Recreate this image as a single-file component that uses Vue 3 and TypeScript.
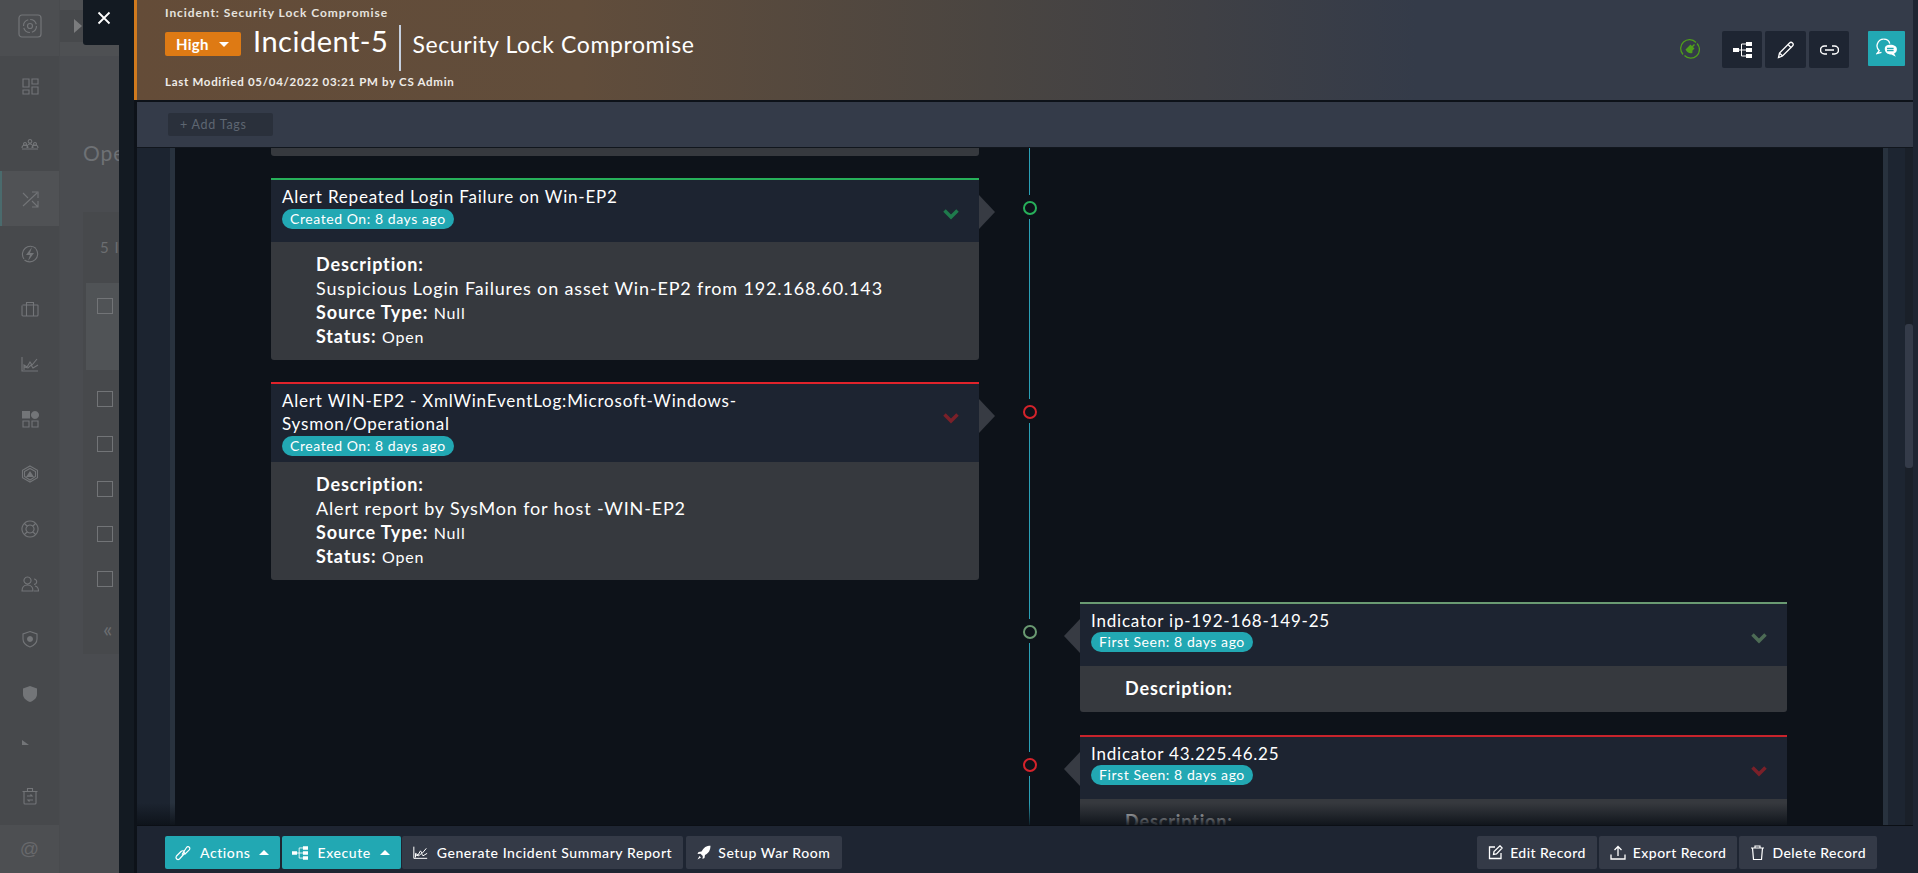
<script setup lang="ts">
interface NavIcon { d: string; fill?: string; active?: boolean; short?: boolean }
const navIcons: NavIcon[] = [
  { d: 'M2 2h6v8H2zM11 2h6v5h-6zM2 13h6v4H2zM11 10h6v7h-6z' },
  { d: 'M1 13c0-2 1-3 3-3s3 1 3 3M6 13c0-3 1-4 3-4s3 1 3 4M11 13c0-2 1-3 3-3s3 1 3 3M1 14h16M4 7.500a1.500 1.500 0 1 0 .01 0M9 4.500a1.800 1.800 0 1 0 .01 0M14 7.500a1.500 1.500 0 1 0 .01 0' },
  { d: 'M2 16 16 3M11 2h6v6M2 3l5 5M11 11l6 6M17 11v6h-6', active: true },
  { d: 'M15 3.500A8 8 0 0 0 3 14M3.500 15A8 8 0 0 0 15 4', fill: 'M11 2 5 10h4l-2 6 6-8H9z' },
  { d: 'M1.500 5h15a.5.5 0 0 1 .5.5V15a1 1 0 0 1-1 1H2a1 1 0 0 1-1-1V5.500M5.500 5V2.500h7V5M5.500 5v11M12.500 5v11' },
  { d: 'M1 2v14h16M3 15v-5l3 2 3-5 2 3 5-6M3 12l4 1 3-3 2 3 5-3' },
  { d: 'M2 11h6v6H2zM11 11h6v6h-6z', fill: 'M1 1h8v7.500H1zM14 1a4 4 0 1 1-.01 0' },
  { d: 'M9 1l7.500 4.200v7.600L9 17l-7.500-4.200V5.200zM3.500 6.500 9 3.500l5.500 3v5L9 15l-5.500-3.500z', fill: 'M9 6l4 6H5z' },
  { d: 'M9 1a8 8 0 1 0 .01 0M9 5a4 4 0 1 0 .01 0M3.500 3.500l3 3M14.500 3.500l-3 3M3.500 14.500l3-3M14.500 14.500l-3-3' },
  { d: 'M6.500 2a3.500 3.500 0 1 0 .01 0M1 16c0-4 2-6 5.500-6s5.500 2 5.500 6zM13 4a2.700 2.700 0 1 1 0 5.400M14 11c2 .5 3.500 2 3.500 5H13' },
  { d: 'M9 1.500l7 2.500v5c0 4-3 6.500-7 8-4-1.500-7-4-7-8V4z', fill: 'M9 6a3 3 0 1 0 .01 0' },
  { d: '', fill: 'M9 1l7 2.500V9c0 4-3 6.500-7 8-4-1.500-7-4-7-8V3.500z' },
  { d: '', fill: 'M1 8V3l7 5z', short: true },
  { d: 'M3 4.500h12V16a1 1 0 0 1-1 1H4a1 1 0 0 1-1-1zM1.500 4.500h15M6.500 4V1.500h5V4M6 9h5l-1.500-1.500M12 13H7l1.500 1.500', short: true }
]
</script>

<template>
  <div class="screen">
    <nav class="nav">
      <div class="nav-logo">
        <svg width="24" height="24" viewBox="0 0 24 24" fill="none" stroke="#737578" stroke-width="1.200">
          <rect x="1" y="1" width="22" height="22" rx="3" />
          <circle cx="12" cy="12" r="6.500" stroke-dasharray="8 2" />
          <circle cx="12" cy="12" r="2.500" />
        </svg>
      </div>
      <div
        v-for="(icon, i) in navIcons"
        :key="i"
        class="nav-row"
        :class="{ active: icon.active, short: icon.short, first: i === 0 }"
      >
        <svg width="18" height="18" viewBox="0 0 18 18" fill="none" stroke="#737578" stroke-width="1.100">
          <path v-if="icon.d" :d="icon.d" />
          <path v-if="icon.fill" :d="icon.fill" fill="#737578" stroke="none" />
        </svg>
      </div>
      <div class="nav-at">@</div>
    </nav>

    <section class="page">
      <div class="page-crumb"><span class="crumb-arrow"></span></div>
      <h1 class="page-title">Open Incidents</h1>
      <div class="list">
        <div class="list-head">5 Incidents</div>
        <div class="list-selected"><span class="check"></span></div>
        <div class="list-row"><span class="check"></span></div>
        <div class="list-row"><span class="check"></span></div>
        <div class="list-row"><span class="check"></span></div>
        <div class="list-row"><span class="check"></span></div>
        <div class="list-row"><span class="check"></span></div>
        <div class="pager">«</div>
      </div>
    </section>

    <div class="drawer">
      <button class="close" type="button" aria-label="Close">
        <svg width="14" height="14" viewBox="0 0 14 14" stroke="#fff" stroke-width="1.800"><path d="M1.500 1.500l11 11M12.500 1.500l-11 11" /></svg>
      </button>
      <div class="panel">
        <header class="head">
          <div class="head-main">
            <div class="crumb">Incident: Security Lock Compromise</div>
            <div class="title-row">
              <span class="sev">High<i class="caret-down"></i></span>
              <span class="inc">Incident-5</span>
              <span class="inc-name">Security Lock Compromise</span>
            </div>
            <div class="modified">Last Modified 05/04/2022 03:21 PM by CS Admin</div>
          </div>
          <div class="head-tools">
            <svg class="status" width="20" height="20" viewBox="0 0 20 20" fill="none">
              <path d="M3 15.500A8.500 8.500 0 0 1 16 3.500M17 4.500A8.500 8.500 0 0 1 4.500 16.500" stroke="#4f9e1b" stroke-width="1.300" />
              <path d="M5.500 10.500l5-5 1.500 1.500 2-2 1 1-2 2 1.500 1.500-2 2-.2 2.500c-2.800 1-5.500-.8-6.800-3.500z" fill="#4f9e1b" />
            </svg>
            <div class="tool-group">
              <button class="tool" type="button" aria-label="Playbooks">
                <svg width="19" height="16" viewBox="0 0 19 16" fill="#fff"><path d="M0 6h6v4H0zM13 0h6v4h-6zM13 6h6v4h-6zM13 12h6v4h-6z" /><path d="M6 8h7M8.500 2H13M8.500 14H13M8.500 2v12" stroke="#fff" fill="none" /></svg>
              </button>
              <button class="tool tool-mid" type="button" aria-label="Edit">
                <svg width="18" height="18" viewBox="0 0 18 18" fill="none" stroke="#fff" stroke-width="1.300"><path d="M1.500 16.500l1-4.500L12.500 2c1-1 2-1 3 0s1 2 0 3L5.500 15zM2.500 12l3 3M11 3.500l3.500 3.500" /></svg>
              </button>
              <button class="tool" type="button" aria-label="Link">
                <svg width="19" height="10" viewBox="0 0 19 10" fill="none" stroke="#fff" stroke-width="1.500"><path d="M7 1H4.500a4 4 0 0 0 0 8H7M12 1h2.500a4 4 0 0 1 0 8H12M5 5h9" /></svg>
              </button>
            </div>
            <button class="chat" type="button" aria-label="Collaboration">
              <svg width="22" height="21" viewBox="0 0 20 19" fill="none" stroke="#fff" stroke-width="1.200"><path d="M7 1a6 6 0 0 0-4 10.500L1 14l4-1" /><path d="M7 1c3 0 5 1.500 5.500 4" /><path d="M13 6c3.500 0 6 1.600 6 4s-1 3.500-2.500 4l1.500 3-4-2c-3.500 0-6-2-6-5s2-4 5-4z" fill="#fff" stroke="none" /><path d="M10 9.500h6M10 11.500h6" stroke="#22a8b3" /></svg>
            </button>
          </div>
        </header>

        <div class="tags"><span class="add-tags">+ Add Tags</span></div>

        <div class="scroll">
          <div class="gutter"></div>
          <div class="timeline">
            <div class="row">
              <div class="slot stub-slot"><div class="stub"></div></div>
              <div class="axis"><span class="seg grow"></span></div>
              <div class="slot"></div>
            </div>

            <div class="row">
              <div class="slot">
                <article class="card card-left top-green">
                  <div class="card-head">
                    <div class="card-titles">
                      <div class="card-title">Alert Repeated Login Failure on Win-EP2</div>
                      <span class="pill">Created On: 8 days ago</span>
                    </div>
                    <svg class="chev" width="16" height="11" viewBox="0 0 16 11" fill="none" stroke="#1f7a4c" stroke-width="3.500"><path d="M1.500 1.500 8 8l6.500-6.500" /></svg>
                  </div>
                  <div class="card-body">
                    <div><b>Description:</b></div>
                    <div>Suspicious Login Failures on asset Win-EP2 from 192.168.60.143</div>
                    <div><b>Source Type:</b> <span class="val">Null</span></div>
                    <div><b>Status:</b> <span class="val">Open</span></div>
                  </div>
                </article>
              </div>
              <div class="axis">
                <span class="seg top"></span><span class="dot dot-green"></span><span class="seg grow"></span>
              </div>
              <div class="slot"></div>
            </div>

            <div class="row">
              <div class="slot">
                <article class="card card-left top-red">
                  <div class="card-head">
                    <div class="card-titles">
                      <div class="card-title narrow">Alert WIN-EP2 - XmlWinEventLog:Microsoft-Windows-Sysmon/Operational</div>
                      <span class="pill">Created On: 8 days ago</span>
                    </div>
                    <svg class="chev" width="16" height="11" viewBox="0 0 16 11" fill="none" stroke="#7a2029" stroke-width="3.500"><path d="M1.500 1.500 8 8l6.500-6.500" /></svg>
                  </div>
                  <div class="card-body">
                    <div><b>Description:</b></div>
                    <div>Alert report by SysMon for host -WIN-EP2</div>
                    <div><b>Source Type:</b> <span class="val">Null</span></div>
                    <div><b>Status:</b> <span class="val">Open</span></div>
                  </div>
                </article>
              </div>
              <div class="axis">
                <span class="seg top"></span><span class="dot dot-red"></span><span class="seg grow"></span>
              </div>
              <div class="slot"></div>
            </div>

            <div class="row">
              <div class="slot"></div>
              <div class="axis">
                <span class="seg top"></span><span class="dot dot-sage"></span><span class="seg grow"></span>
              </div>
              <div class="slot slot-wide">
                <article class="card card-right top-sage">
                  <div class="card-head">
                    <div class="card-titles">
                      <div class="card-title">Indicator ip-192-168-149-25</div>
                      <span class="pill">First Seen: 8 days ago</span>
                    </div>
                    <svg class="chev" width="16" height="11" viewBox="0 0 16 11" fill="none" stroke="#4d6b55" stroke-width="3.500"><path d="M1.500 1.500 8 8l6.500-6.500" /></svg>
                  </div>
                  <div class="card-body">
                    <div><b>Description:</b></div>
                  </div>
                </article>
              </div>
            </div>

            <div class="row">
              <div class="slot"></div>
              <div class="axis">
                <span class="seg top"></span><span class="dot dot-red"></span><span class="seg grow"></span>
              </div>
              <div class="slot">
                <article class="card card-right top-red2">
                  <div class="card-head">
                    <div class="card-titles">
                      <div class="card-title">Indicator 43.225.46.25</div>
                      <span class="pill">First Seen: 8 days ago</span>
                    </div>
                    <svg class="chev" width="16" height="11" viewBox="0 0 16 11" fill="none" stroke="#7a2029" stroke-width="3.500"><path d="M1.500 1.500 8 8l6.500-6.500" /></svg>
                  </div>
                  <div class="card-body">
                    <div><b>Description:</b></div>
                  </div>
                </article>
              </div>
            </div>
          </div>
          <div class="gutter-right"></div>
          <div class="scrollbar"><span class="thumb"></span></div>
          <div class="fade"></div>
        </div>

        <footer class="foot">
          <div class="foot-group">
            <button class="btn teal" type="button">
              <svg width="16" height="16" viewBox="0 0 16 16" fill="none" stroke="#fff" stroke-width="1.200"><path d="M1.500 11 6 6.500c1-1 2.500-1 3 0s.5 2-.5 3L4.500 14c-1 .8-2 .8-2.800 0s-.8-2-.2-3zM7 9.500l4.500-7c.8-1 2-1 2.800-.3s.6 2-.3 3L9.500 9.500" /></svg>
              Actions<i class="caret-up"></i>
            </button>
            <button class="btn teal" type="button">
              <svg width="16" height="14" viewBox="0 0 19 16" fill="#fff"><path d="M0 6h6v4H0zM13 0h6v4h-6zM13 6h6v4h-6zM13 12h6v4h-6z" /><path d="M6 8h7M8.500 2H13M8.500 14H13M8.500 2v12" stroke="#fff" fill="none" /></svg>
              Execute<i class="caret-up"></i>
            </button>
            <button class="btn gen" type="button">
              <svg width="15" height="15" viewBox="0 0 18 18" fill="none" stroke="#fff" stroke-width="1.200"><path d="M1 2v14h16M3 15v-5l3 2 3-5 2 3 5-6M3 12l4 1 3-3 2 3 5-3" /></svg>
              Generate Incident Summary Report
            </button>
            <button class="btn war" type="button">
              <svg width="14" height="15" viewBox="0 0 14 15" fill="#fff"><path d="M13.500.5C9.500.5 6.500 2.500 4.500 6.500l-3 .5-1 2 3-.3 2.300 2.300-.3 3 2-1 .5-3c4-2 5.500-5 5.500-10zM2.500 11l-2 3.500 3.500-2z" /></svg>
              Setup War Room
            </button>
          </div>
          <div class="foot-group foot-right">
            <button class="btn" type="button">
              <svg width="15" height="15" viewBox="0 0 15 15" fill="none" stroke="#fff" stroke-width="1.300"><path d="M13 8v5.500H1.500V2H7M5.500 9.500l.5-3L12 .8l2.200 2.200L8.500 9z" /></svg>
              Edit Record
            </button>
            <button class="btn" type="button">
              <svg width="16" height="15" viewBox="0 0 16 15" fill="none" stroke="#fff" stroke-width="1.300"><path d="M8 11V1.500M4.500 5 8 1.500 11.500 5M1 9.500V14h14V9.500" /></svg>
              Export Record
            </button>
            <button class="btn" type="button">
              <svg width="15" height="15" viewBox="0 0 15 15" fill="none" stroke="#fff" stroke-width="1.200"><path d="M1 3h13M5 3V1h5v2M2.500 3l1 11.500h8l1-11.500" /></svg>
              Delete Record
            </button>
          </div>
        </footer>
      </div>
    </div>
  </div>
</template>

<style>
html, body { margin: 0; padding: 0; background: #0d1219; }
</style>

<style scoped>
.screen {
  position: relative;
  display: flex;
  width: 1918px;
  height: 873px;
  overflow: hidden;
  font-family: Lato, "Open Sans", sans-serif;
  background: #4a4c50;
  color: #fff;
}
button { font-family: inherit; border: 0; cursor: pointer; }

/* dimmed application behind the drawer */
.nav {
  flex: 0 0 60px;
  display: flex;
  flex-direction: column;
  background: #47494c;
  border-right: 1px solid #494b4e;
  box-sizing: border-box;
}
.nav-logo { height: 56px; flex: none; display: flex; align-items: center; justify-content: center; background: #4c4e51; padding-bottom: 4px; box-sizing: border-box; }
.nav-row { height: 55px; flex: none; display: flex; align-items: center; justify-content: center; box-sizing: border-box; }
.nav-row.first { height: 60px; }
.nav-row.short { height: 50px; }
.nav-row.active { background: #505255; border-left: 2px solid #4a6b6d; padding-right: 2px; }
.nav-at {
  margin-top: auto;
  height: 48px;
  display: flex;
  align-items: center;
  justify-content: center;
  background: #4d4f52;
  color: #68696c;
  font-size: 19px;
  font-family: "Liberation Sans", sans-serif;
}
.page { flex: 1; min-width: 0; overflow: hidden; }
.page-crumb { height: 56px; box-sizing: border-box; padding: 10px 0 0; background: #4e5053; }
.crumb-arrow { display: block; height: 32px; background: #47494c; position: relative; }
.crumb-arrow::after {
  content: ""; position: absolute; left: 14px; top: 9px;
  border-left: 8px solid #7b7c7e; border-top: 7px solid transparent; border-bottom: 7px solid transparent;
}
.page-title {
  margin: 0 0 0 23px; height: 156px; box-sizing: border-box; padding-top: 83px;
  font-size: 21px; font-weight: 400; line-height: 28px; letter-spacing: 1px; color: #6e7175; white-space: nowrap;
}
.list { margin-left: 23px; height: 442px; background: #47494c; white-space: nowrap; }
.list-head { height: 71px; box-sizing: border-box; padding: 24px 0 0 17px; font-size: 15px; line-height: 22px; letter-spacing: 1px; color: #6c6e71; }
.list-selected { height: 87px; margin: 0 0 7px 3px; background: #505356; box-sizing: border-box; padding: 15px 0 0 11px; }
.list-row { height: 45px; padding: 14px 0 0 14px; box-sizing: border-box; }
.check { display: block; width: 14px; height: 14px; border: 1px solid #727477; }
.pager { margin-top: 13px; padding-left: 20px; font-size: 22px; line-height: 28px; color: #6b6d70; }

/* drawer */
.drawer { position: absolute; left: 119px; right: 0; top: 0; bottom: 0; background: #131a22; padding-left: 15px; display: flex; }
.close {
  position: absolute; left: -36px; top: 0; width: 36px; height: 45px;
  background: #131a22; border-bottom-left-radius: 3px;
  display: flex; align-items: center; justify-content: center; padding: 0 0 9px 6px; box-sizing: border-box;
}
.panel { flex: 1; min-width: 0; display: flex; flex-direction: column; background: #0d1219; border-right: 5px solid #1e2532; }
.head {
  height: 100px; flex: none; box-sizing: border-box;
  border-left: 3px solid #d07a1e; margin-bottom: 2px;
  padding: 0 8px 0 28px;
  display: flex; justify-content: space-between;
  background: linear-gradient(90deg, #644c38 0%, #614d3b 25%, #4a4541 48%, #343b49 72%);
}
.crumb { margin-top: 5px; font-size: 12px; line-height: 15px; font-weight: 700; letter-spacing: .93px; color: #e6e3df; }
.title-row { margin-top: 5px; height: 46px; display: flex; align-items: flex-start; }
.sev {
  width: 76px; height: 24px; box-sizing: border-box; margin-top: 7px;
  display: flex; align-items: center; padding-left: 11px;
  background: #de7a14; border-radius: 2px;
  font-size: 15px; font-weight: 700; letter-spacing: .3px;
}
.caret-down { margin-left: 10px; border-top: 5px solid #fff; border-left: 5px solid transparent; border-right: 5px solid transparent; }
.inc { margin-left: 12px; padding-right: 11px; height: 46px; box-sizing: border-box; font-size: 29px; line-height: 32px; letter-spacing: .5px; border-right: 2px solid #c5d0e0; }
.inc-name { margin-left: 11px; font-size: 23px; line-height: 38px; letter-spacing: .6px; }
.modified { margin-top: 3px; font-size: 11.500px; line-height: 15px; font-weight: 700; letter-spacing: .7px; color: #efece8; }
.head-tools { display: flex; align-items: flex-start; padding-top: 31px; }
.status { margin-top: 8px; margin-right: 22px; }
.tool-group { display: flex; gap: 3px; margin-right: 19px; }
.tool { width: 40px; height: 37px; background: #1e2532; border-radius: 2px; display: flex; align-items: center; justify-content: center; padding: 0; }
.tool-mid { width: 41px; }
.chat { width: 37px; height: 35px; background: #22a8b3; border-radius: 1px; display: flex; align-items: center; justify-content: center; padding: 0; }

.tags { height: 46px; flex: none; box-sizing: border-box; margin-left: 3px; padding: 11px 0 0 31px; background: #343b49; border-bottom: 1px solid #11161d; }
.add-tags {
  display: block; width: 105px; height: 23px; box-sizing: border-box; padding-left: 12px;
  background: #2a303b; border-radius: 2px;
  font-size: 12.500px; line-height: 23px; letter-spacing: .75px; color: #5e6672;
}

.scroll { position: relative; flex: 1; min-height: 0; margin-left: 3px; overflow: hidden; display: flex; background: #0d1219; }
.gutter { flex: none; width: 33px; background: #1c2430; border-right: 5px solid #28323e; }
.timeline { flex: none; width: 1708px; padding-left: 96px; box-sizing: border-box; }
.gutter-right { flex: none; width: 22px; background: #1d2531; border-left: 5px solid #28323e; box-sizing: border-box; }
.scrollbar { flex: 1; background: #1a2029; padding-top: 176px; }
.thumb { display: block; height: 144px; background: #343b49; border-radius: 3px; }
.fade {
  position: absolute; left: 0; right: 30px; bottom: 0; height: 22px;
  background: linear-gradient(180deg, rgba(13, 18, 25, 0), rgba(13, 18, 25, .92));
}

.row { display: grid; grid-template-columns: 708px 101px 707px; }
.slot { padding-bottom: 22px; min-height: 0; }
.slot-wide { padding-bottom: 23px; }
.stub-slot { height: 8px; }
.stub { height: 8px; background: #36393e; border-radius: 0 0 3px 3px; }
.axis { display: flex; flex-direction: column; align-items: center; }
.seg { width: 1px; background: #2a9fb5; flex: none; }
.seg.top { height: 17px; }
.seg.grow { flex: 1; }
.dot { flex: none; width: 14px; height: 14px; box-sizing: border-box; border: 2px solid; border-radius: 50%; margin: 6px 0 4px; }
.dot-green { border-color: #27b05a; }
.dot-red { border-color: #d4232b; }
.dot-sage { border-color: #6a9a72; }

.card { position: relative; border-radius: 0 0 3px 3px; }
.card::after { content: ""; position: absolute; top: 17px; width: 16px; height: 34px; background: #373b43; }
.card-left::after { left: 100%; clip-path: polygon(0 0, 100% 50%, 0 100%); }
.card-right::after { right: 100%; clip-path: polygon(100% 0, 0 50%, 100% 100%); }
.card-head {
  min-height: 64px; box-sizing: border-box; padding: 5px 20px 6px 11px;
  display: flex; justify-content: space-between; background: #1d2431;
}
.top-green .card-head { border-top: 2px solid #27b05a; }
.top-red .card-head { border-top: 2px solid #e0232b; }
.top-red2 .card-head { border-top: 2px solid #c8232b; }
.top-sage .card-head { border-top: 2px solid #6a9a72; }
.card-title { font-size: 17px; line-height: 23px; letter-spacing: .8px; color: #fff; }
.card-title.narrow { width: 480px; }
.pill {
  display: inline-block; height: 20px; padding: 0 8px; margin-top: 1px; border-radius: 10px;
  background: #22a8b3; font-size: 14px; line-height: 19px; letter-spacing: .57px; vertical-align: top;
}
.card-right .pill { margin-top: 0; }
.chev { flex: none; margin-top: 24px; }
.card-body {
  padding: 10px 20px 12px 45px; background: #36393e; border-radius: 0 0 3px 3px;
  font-size: 18px; line-height: 24px; color: #fff; letter-spacing: .85px;
}
.val { font-size: 16px; line-height: 1; }
.foot {
  flex: none; height: 48px; box-sizing: border-box; margin-left: 3px; padding: 10px 36px 0 28px;
  display: flex; justify-content: space-between;
  background: #1e2532; border-top: 1px solid #0b0f15;
}
.foot-group { display: flex; gap: 2px; }
.btn {
  height: 33px; box-sizing: border-box; padding: 0 11px;
  display: flex; align-items: center; gap: 7px;
  background: #343a47; color: #fff; border-radius: 2px;
  font-size: 14px; letter-spacing: .58px; font-weight: 500;
  white-space: nowrap;
}
.btn.gen { margin-left: -1px; gap: 9px; }
.btn.war { margin-left: 1px; padding-right: 12px; }
.btn.teal { background: #22a8b3; padding: 0 11px 0 10px; gap: 9px; }
.foot-right .btn { letter-spacing: .45px; }
.caret-up { margin-left: 0; border-bottom: 5px solid #fff; border-left: 5px solid transparent; border-right: 5px solid transparent; }
</style>
